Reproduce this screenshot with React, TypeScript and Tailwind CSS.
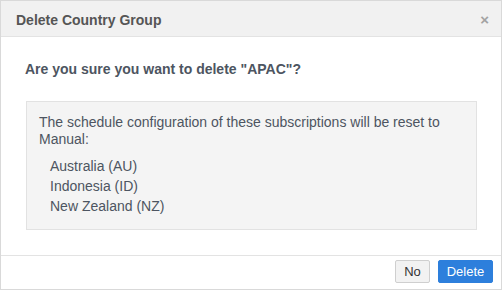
import React from 'react';

const countries = ['Australia (AU)', 'Indonesia (ID)', 'New Zealand (NZ)'];

export default function App() {
  return (
    <div className="w-[502px] h-[290px] bg-white border border-[#d9d9d9] flex flex-col font-['Liberation_Sans',Arial,sans-serif] text-[#4d5561]">
      {/* header */}
      <div className="h-[36px] shrink-0 bg-[#f1f1f1] border-b border-[#e3e3e3] flex items-center justify-between pl-[15px] pr-[12px]">
        <h2 className="mt-[3px] text-[14px] font-bold text-[#555]">Delete Country Group</h2>
        <span className="mt-[2px] text-[15px] font-bold text-[#a3a3a3] leading-none">×</span>
      </div>

      <div className="flex-1 px-[24px] pt-[22px]">
        <p className="text-[14px] font-bold text-[#4d5561]">Are you sure you want to delete "APAC"?</p>
        <div className="mt-[21px] ml-px w-[451px] h-[129px] bg-[#f4f4f4] border border-[#e2e2e2] pl-[12px] pr-[10px] pt-[12px] text-[14px]">
          <p className="leading-[17px]">The schedule configuration of these subscriptions will be reset to Manual:</p>
          <ul className="mt-[8px] pl-[11px]">
            {countries.map(c => (
              <li key={c} className="leading-[20px]">{c}</li>
            ))}
          </ul>
        </div>
      </div>

      {/* footer */}
      <div className="h-[34px] shrink-0 border-t border-[#e3e3e3] flex items-start justify-end gap-[8px] pt-[4px] pr-[8px]">
        <button className="h-[23px] w-[35px] text-[13px] text-[#333] bg-[#f2f2f2] border border-[#cfcfcf] rounded-[2px]">No</button>
        <button className="h-[23px] w-[55px] text-[13px] text-white bg-[#2d7fdc] border border-[#2d7fdc] rounded-[2px]">Delete</button>
      </div>
    </div>
  );
}
